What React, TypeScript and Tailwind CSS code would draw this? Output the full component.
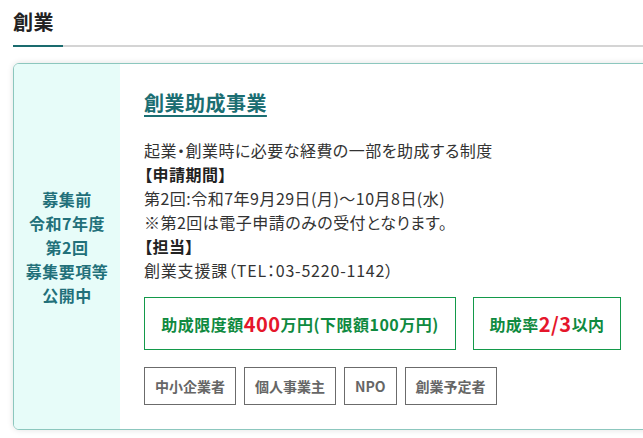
import React from 'react';

const font = { fontFamily: '"Noto Sans CJK JP", "Noto Sans", sans-serif' };

const tags = ["中小企業者", "個人事業主", "NPO", "創業予定者"];

export default function App() {
    return (
        <div className="w-[643px] h-[438px] overflow-hidden bg-white tracking-[0.03em]" style={font}>
            <div className="w-[700px] pl-[13px] pt-[7px]">
                <h2 className="text-[20px] leading-[30px] font-bold text-[#222]">創業</h2>
                <div className="mt-[8px] flex h-[2px]">
                    <div className="w-[50px] bg-[#1a6b6e]"></div>
                    <div className="flex-1 bg-[#d4d4d4]"></div>
                </div>

                <div className="mt-[16px] flex rounded-md border border-[#8cc7be] overflow-hidden shadow-[0_0_6px_rgba(0,0,0,0.12)]">
                    <div className="w-[106px] shrink-0 bg-[#e7fcf9] flex flex-col items-center justify-center text-[16px] leading-[24px] font-bold text-[#22707a] text-center">
                        <span>募集前</span>
                        <span>令和7年度</span>
                        <span>第2回</span>
                        <span>募集要項等</span>
                        <span>公開中</span>
                    </div>
                    <div className="flex-1 pl-[24px] pt-[24px] pb-[24px]">
                        <a className="block text-[20px] leading-[30px] font-bold text-[#1b6e72] underline underline-offset-[4px] decoration-[2px]">創業助成事業</a>
                        <div className="mt-[20px] text-[16px] leading-[24px] text-[#333] [font-feature-settings:'palt']">
                            <p>起業・創業時に必要な経費の一部を助成する制度</p>
                            <p className="font-bold text-[#222]">【申請期間】</p>
                            <p>第2回:令和7年9月29日(月)～10月8日(水)</p>
                            <p>※第2回は電子申請のみの受付となります。</p>
                            <p className="font-bold text-[#222]">【担当】</p>
                            <p className="tracking-[0.05em]">創業支援課（TEL：03-5220-1142）</p>
                        </div>
                        <div className="mt-[15px] flex gap-[17px]">
                            <div className="h-[53px] w-[312px] flex items-center justify-center border border-[#13994a] text-[16px] font-bold text-[#0f8a40]">
                                助成限度額<span className="text-[20px] text-[#e5162b]">400</span>万円(下限額100万円)
                            </div>
                            <div className="h-[53px] w-[148px] flex items-center justify-center border border-[#13994a] text-[16px] font-bold text-[#0f8a40]">
                                助成率<span className="text-[20px] text-[#e5162b]">2/3</span>以内
                            </div>
                        </div>
                        <div className="mt-[17px] flex gap-[8px]">
                            {tags.map(t => (
                                <span key={t} className="h-[38px] px-[10px] flex items-center border border-[#6b6b6b] text-[14px] font-bold tracking-normal text-[#666]">{t}</span>
                            ))}
                        </div>
                    </div>
                </div>
            </div>
        </div>
    );
}
